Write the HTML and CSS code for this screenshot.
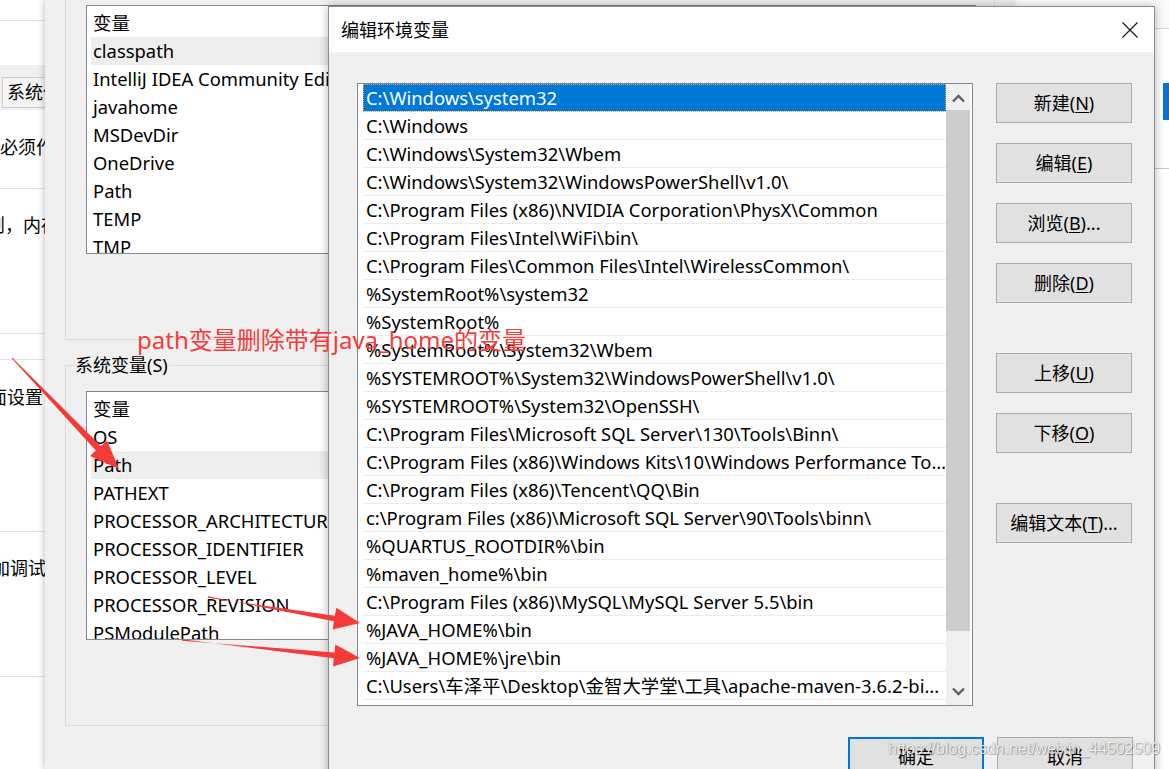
FILE: index.html
```html
<!DOCTYPE html>
<html lang="zh-CN">
<head>
<meta charset="utf-8">
<title>编辑环境变量</title>
<link rel="stylesheet" href="styles.css">
</head>
<body>
<div class="desktop">

  <div class="win-back">
    <div class="bk-top"></div>
    <div class="bk-gap"></div>
    <div class="bk-band"><div class="bk-btn">系统信息</div></div>
    <div class="bk-sec bk-s1"><span>必须作为管理员</span></div>
    <div class="bk-sec bk-s2"><span class="sh13">则，内存使用</span></div>
    <div class="bk-sec bk-s3"></div>
    <div class="bk-sec bk-s4"><span class="sh11">面设置</span></div>
    <div class="bk-sec bk-s5"><span class="sh8">加调试信息</span></div>
  </div>

  <div class="win-mid">
    <div class="grp grp-user">
      <div class="lv">
        <div class="lv-row">变量</div>
        <div class="lv-row sel">classpath</div>
        <div class="lv-row">IntelliJ IDEA Community Edition</div>
        <div class="lv-row">javahome</div>
        <div class="lv-row">MSDevDir</div>
        <div class="lv-row">OneDrive</div>
        <div class="lv-row">Path</div>
        <div class="lv-row">TEMP</div>
        <div class="lv-row">TMP</div>
      </div>
    </div>
    <fieldset class="grp grp-sys">
      <legend>系统变量(S)</legend>
      <div class="lv">
        <div class="lv-row">变量</div>
        <div class="lv-row">OS</div>
        <div class="lv-row sel">Path</div>
        <div class="lv-row">PATHEXT</div>
        <div class="lv-row">PROCESSOR_ARCHITECTURE</div>
        <div class="lv-row">PROCESSOR_IDENTIFIER</div>
        <div class="lv-row">PROCESSOR_LEVEL</div>
        <div class="lv-row">PROCESSOR_REVISION</div>
        <div class="lv-row">PSModulePath</div>
      </div>
    </fieldset>
  </div>

  <div class="win-right">
    <div class="rs-top"></div>
    <div class="rs-mid"><div class="rs-blue"></div></div>
  </div>

  <div class="dialog">
    <div class="dlg-title">
      <span class="dlg-caption">编辑环境变量</span>
      <svg class="dlg-close" width="16" height="16" viewBox="0 0 16 16"><path d="M0.5 0.5L15.5 15.5M15.5 0.5L0.5 15.5" stroke="#111" stroke-width="1.1" fill="none"/></svg>
    </div>
    <div class="dlg-body">
      <div class="dlg-main">
        <div class="plist">
          <div class="plist-rows">
            <div class="prow sel">C:\Windows\system32</div>
            <div class="prow">C:\Windows</div>
            <div class="prow">C:\Windows\System32\Wbem</div>
            <div class="prow">C:\Windows\System32\WindowsPowerShell\v1.0\</div>
            <div class="prow">C:\Program Files (x86)\NVIDIA Corporation\PhysX\Common</div>
            <div class="prow">C:\Program Files\Intel\WiFi\bin\</div>
            <div class="prow">C:\Program Files\Common Files\Intel\WirelessCommon\</div>
            <div class="prow">%SystemRoot%\system32</div>
            <div class="prow">%SystemRoot%</div>
            <div class="prow">%SystemRoot%\System32\Wbem</div>
            <div class="prow">%SYSTEMROOT%\System32\WindowsPowerShell\v1.0\</div>
            <div class="prow">%SYSTEMROOT%\System32\OpenSSH\</div>
            <div class="prow">C:\Program Files\Microsoft SQL Server\130\Tools\Binn\</div>
            <div class="prow">C:\Program Files (x86)\Windows Kits\10\Windows Performance To...</div>
            <div class="prow">C:\Program Files (x86)\Tencent\QQ\Bin</div>
            <div class="prow">c:\Program Files (x86)\Microsoft SQL Server\90\Tools\binn\</div>
            <div class="prow">%QUARTUS_ROOTDIR%\bin</div>
            <div class="prow">%maven_home%\bin</div>
            <div class="prow">C:\Program Files (x86)\MySQL\MySQL Server 5.5\bin</div>
            <div class="prow">%JAVA_HOME%\bin</div>
            <div class="prow">%JAVA_HOME%\jre\bin</div>
            <div class="prow">C:\Users\车泽平\Desktop\金智大学堂\工具\apache-maven-3.6.2-bi...</div>
          </div>
          <div class="vscroll">
            <div class="vs-btn"><svg width="24" height="26" viewBox="0 0 24 26"><path d="M7 17.5L12.5 12L18 17.5" stroke="#606060" stroke-width="2.4" fill="none"/></svg></div>
            <div class="vs-thumb"></div>
            <div class="vs-track"></div>
            <div class="vs-btn"><svg width="24" height="26" viewBox="0 0 24 26"><path d="M7 9.5L12.5 15L18 9.5" stroke="#606060" stroke-width="2.4" fill="none"/></svg></div>
          </div>
        </div>
        <div class="btn-col">
          <button class="btn">新建(<u>N</u>)</button>
          <button class="btn">编辑(<u>E</u>)</button>
          <button class="btn">浏览(<u>B</u>)...</button>
          <button class="btn">删除(<u>D</u>)</button>
          <button class="btn btn-sep">上移(<u>U</u>)</button>
          <button class="btn">下移(<u>O</u>)</button>
          <button class="btn btn-sep">编辑文本(<u>T</u>)...</button>
        </div>
      </div>
      <div class="dlg-foot">
        <button class="btn btn-default">确定</button>
        <button class="btn">取消</button>
      </div>
    </div>
  </div>

  <div class="note">path变量删除带有java_home的变量</div>

  <svg class="arrows" width="1169" height="769" viewBox="0 0 1169 769">
    <polygon points="11.6,358.3 12.4,357.7 101,446 107,440.5 119,469 90,456 95.8,450.6" fill="#f53a3a"/>
    <polygon points="208.1,596.3 207.9,597.7 334.8,615.8 336.4,607.8 360,623 332.6,629.5 334,621.3" fill="#f53a3a"/>
    <polygon points="182.05,639.3 181.95,640.7 334.4,652.6 335.3,644.5 360,658 333,666.5 333.8,658.2" fill="#f53a3a"/>
  </svg>

  <div class="watermark">https://blog.csdn.net/weixin_44502509</div>
</div>
</body>
</html>
```

FILE: styles.css
```css
* { box-sizing: border-box; margin: 0; padding: 0; }
html, body { width: 1169px; height: 769px; overflow: hidden; }
body {
  font-family: "Noto Sans", "Noto Sans CJK SC", sans-serif;
  font-size: 18px;
  color: #000;
  background: #fff;
}
.desktop { position: relative; width: 1169px; height: 769px; overflow: hidden; }

/* background window on the far left */
.win-back {
  position: absolute; left: 0; top: 0; width: 90px; height: 769px;
  background: #fff; overflow: hidden; white-space: nowrap;
  display: flex; flex-direction: column;
}
.bk-top { height: 21px; border-bottom: 1px solid #e2e2e2; flex: none; }
.bk-gap { height: 44px; flex: none; }
.bk-band { height: 45px; flex: none; background: #f0f0f0; padding: 12px 0 0 2px; }
.bk-btn {
  height: 31px; border: 1px solid #cccccc; background: #f4f4f4;
  padding-left: 4px; line-height: 28px;
}
.bk-sec { flex: none; border-bottom: 1px solid #e3e3e3; line-height: 28px; }
.bk-s1 { height: 79px; padding-top: 23px; }
.bk-s2 { height: 145px; padding-top: 22px; }
.bk-s3 { height: 26px; }
.bk-s4 { height: 172px; padding-top: 23px; }
.bk-s5 { height: 145px; padding-top: 22px; }
.sh13 { display: inline-block; margin-left: -13px; }
.sh11 { display: inline-block; margin-left: -11px; }
.sh8 { display: inline-block; margin-left: -8px; }

/* middle window (环境变量) */
.win-mid {
  position: absolute; left: 45px; top: 0; width: 970px; height: 769px;
  background: #f0f0f0; overflow: hidden;
  padding-left: 20px;
  box-shadow: -2px 0 6px rgba(0,0,0,.18);
}
.grp { width: 930px; border: 1px solid #dcdcdc; min-width: 0; }
.grp-user { margin-top: -30px; padding: 34px 0 85px 20px; }
.grp-sys { margin-top: 11px; padding: 12px 0 85px 8px; }
.grp-sys legend { padding: 0 1px; line-height: 28px; font-size: 18px; }
.grp-sys .lv { margin-left: 12px; }
.lv {
  width: 890px; height: 249px; background: #fff;
  border: 1px solid #828790; overflow: hidden;
  padding: 3px 4px 0 4px; white-space: nowrap;
  font-size: 18.4px;
}
.lv-row { height: 28px; line-height: 28px; padding-left: 2px; }
.lv-row.sel { background: #eeeeee; }

/* strip at the right edge */
.win-right {
  position: absolute; left: 1155px; top: 0; width: 14px; height: 769px;
  background: #fff;
}
.rs-top { height: 29px; border-bottom: 1px solid #d4d4d4; background: #fafafa; }
.rs-mid { height: 140px; border-bottom: 1px solid #c8c8c8; padding: 54px 0 0 8px; }
.rs-blue { width: 6px; height: 37px; background: #0a74d0; }

/* dialog */
.dialog {
  position: absolute; left: 328px; top: 6px; width: 827px; height: 800px;
  border: 1px solid #8c8c8c; background: #f0f0f0;
  box-shadow: 0 0 9px rgba(0,0,0,.3);
  display: flex; flex-direction: column;
}
.dlg-title {
  height: 45px; background: #fff; flex: none;
  display: flex; align-items: center; justify-content: space-between;
  padding: 0 16px 0 12px;
}
.dlg-caption { font-size: 18px; line-height: 24px; margin-top: -2px; font-family: "Noto Sans CJK SC", sans-serif; }
.dlg-close { display: block; }
.dlg-body { padding: 31px 21px 0 28px; display: flex; flex-direction: column; }
.dlg-main { display: flex; gap: 23px; }

.plist {
  width: 616px; height: 623px; flex: none;
  background: #fff; border: 1px solid #828790;
  padding: 0 2px 0 5px;
  display: flex;
}
.plist-rows { width: 583px; flex: none; overflow: hidden; font-size: 18.4px; }
.prow {
  height: 28px; line-height: 28px; padding-left: 3px;
  border-bottom: 1px solid #ececec;
  white-space: nowrap; overflow: hidden; text-overflow: ellipsis;
}
.prow.sel {
  background: #0078d7; color: #fff;
  outline: 1px dotted #e8a25a; outline-offset: -1px;
}
.vscroll { width: 24px; flex: none; display: flex; flex-direction: column; background: #f0f0f0; }
.vs-btn { height: 26px; flex: none; }
.vs-btn svg { display: block; }
.vs-thumb { height: 521px; flex: none; background: #cdcdcd; }
.vs-track { flex: 1; }

.btn {
  width: 136px; height: 40px; flex: none;
  background: #e1e1e1; border: 1px solid #adadad;
  font: inherit; font-size: 18px; color: #000;
  line-height: 24px; text-align: center; padding: 0;
}
.btn u { text-decoration-thickness: 1px; text-underline-offset: 2px; }
.btn-col { display: flex; flex-direction: column; gap: 20px; }
.btn-col .btn-sep { margin-top: 30px; }
.dlg-foot { display: flex; justify-content: flex-end; gap: 13px; margin-top: 31px; }
.btn-default { border: 2px solid #0078d7; }

/* annotations */
.note {
  position: absolute; left: 137px; top: 324px;
  font-size: 24px; line-height: 32px; color: #f33c3c;
  white-space: nowrap; z-index: 5;
}
.arrows { position: absolute; left: 0; top: 0; z-index: 6; }
.watermark {
  position: absolute; left: 888px; top: 739px; z-index: 7;
  font-family: "Liberation Sans", Arial, sans-serif; font-size: 16px; line-height: 20px;
  color: rgba(255,255,255,.92);
  text-shadow: 0 0 1px rgba(0,0,0,.45), 1px 1px 1px rgba(0,0,0,.25);
  white-space: nowrap;
}
```
